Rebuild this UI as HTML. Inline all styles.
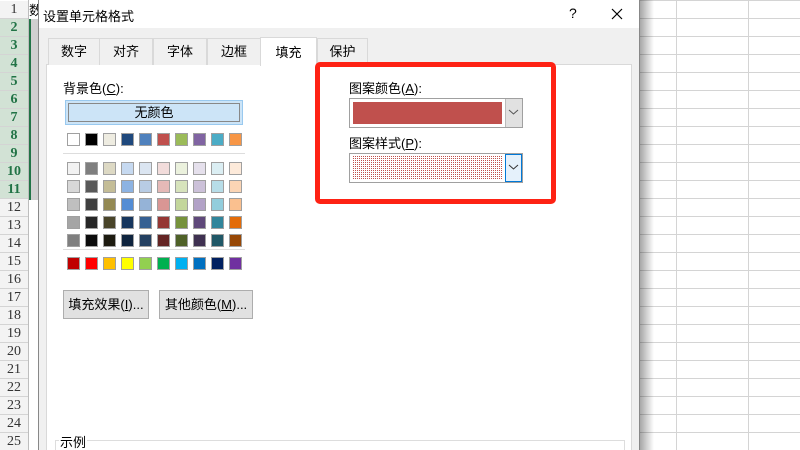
<!DOCTYPE html>
<html style="width:800px;height:450px;overflow:hidden"><head><meta charset="utf-8"><style>
*{margin:0;padding:0;box-sizing:border-box}
body{width:800px;height:450px;overflow:hidden;background:#fff;position:relative;font-family:"Liberation Sans","Noto Sans CJK SC",sans-serif;font-size:12px;color:#000}
.a{position:absolute}
.rh{position:absolute;left:0;width:28px;height:18px;text-align:center;font-size:14px;line-height:18px;font-family:"Liberation Serif","Noto Serif CJK SC",serif;border-bottom:1px solid #d4d4d4;background:#f3f3f3;color:#333}
.rh.s{background:#d2e2d5;color:#217346;font-weight:bold}
.sw{position:absolute;width:13px;height:13px;border:1px solid #a0a0a0}
.tab{position:absolute;top:38px;height:27px;border:1px solid #d9d9d9;border-bottom:none;background:#f0f0f0;text-align:center;line-height:26px;font-size:13px}
.btn{position:absolute;background:#e1e1e1;border:1px solid #adadad;text-align:center;font-size:13px}
</style></head><body>
<div class="a" style="left:640px;top:0;width:160px;height:450px;background:repeating-linear-gradient(to bottom,transparent 0,transparent 1px,#fff 1px,#fff 18px),#d4d4d4"></div>
<div class="a" style="left:676px;top:0;width:1px;height:450px;background:#d4d4d4"></div>
<div class="a" style="left:748px;top:0;width:1px;height:450px;background:#d4d4d4"></div>
<div class="a" style="left:640px;top:0;width:14px;height:450px;background:linear-gradient(to right,rgba(0,0,0,.35),rgba(0,0,0,0))"></div>
<div id="rows"></div>
<div class="a" style="left:28px;top:0;width:1px;height:450px;background:#bdbdbd"></div>
<div class="a" style="left:29px;top:19px;width:10px;height:181px;background:#d0d0d0;border-left:2px solid #217346"></div>
<div class="a" style="left:29px;top:0;width:10px;height:19px;background:#fff;font-size:13px;overflow:hidden">数</div>
<div class="a" style="left:38px;top:0;width:135px;height:2px;background:#217346"></div>
<div class="a" style="left:38px;top:0;width:602px;height:450px;background:#f0f0f0;border-left:1px solid #888;border-right:1px solid #888;overflow:hidden">
 <div class="a" style="left:0;top:0;width:600px;height:28px;background:#fff"></div>
 <div class="a" style="left:4px;top:6px;font-size:13px">设置单元格格式</div>
 <div class="a" style="left:530px;top:5px;font-size:14px">?</div>
 <svg class="a" style="left:572px;top:8px" width="12" height="12"><path d="M1 1L11 11M11 1L1 11" stroke="#000" stroke-width="1.2"/></svg>
 <div class="a" style="left:7px;top:64px;width:586px;height:390px;background:#fff;border:1px solid #d9d9d9"></div>
 <div class="tab" style="left:9px;width:52px">数字</div>
 <div class="tab" style="left:60px;width:54px">对齐</div>
 <div class="tab" style="left:114px;width:54px">字体</div>
 <div class="tab" style="left:168px;width:54px">边框</div>
 <div class="tab" style="left:221px;top:37px;width:57px;height:29px;background:#fff;line-height:29px">填充</div>
 <div class="tab" style="left:278px;width:51px">保护</div>
 <div class="a" style="left:24px;top:78px;font-size:13px">背景色(<u>C</u>):</div>
 <div class="a" style="left:26px;top:100px;width:178px;height:25px;background:#cce4f7;border:1px solid #99c9ef;padding:2px">
  <div style="width:100%;height:100%;border:1px solid #888;text-align:center;line-height:17px;font-size:13px">无颜色</div></div>
 <div class="a" style="left:24px;top:153px;width:182px;height:1px;background:#ddd"></div>
 <div class="a" style="left:24px;top:249px;width:182px;height:1px;background:#ddd"></div>
 <div id="sw"></div>
 <div class="btn" style="left:24px;top:290px;width:86px;height:29px;line-height:27px">填充效果(<u>I</u>)...</div>
 <div class="btn" style="left:120px;top:290px;width:94px;height:29px;line-height:27px">其他颜色(<u>M</u>)...</div>
 <div class="a" style="left:310px;top:78px;font-size:13px">图案颜色(<u>A</u>):</div>
 <div class="a" style="left:310px;top:98px;width:174px;height:30px;background:#fff;border:1px solid #a0a0a0"></div>
 <div class="a" style="left:314px;top:102px;width:149px;height:22px;background:#c0504d"></div>
 <div class="a" style="left:466px;top:99px;width:17px;height:28px;background:#e1e1e1;border-left:1px solid #bbb"></div>
 <svg class="a" style="left:469px;top:108px" width="11" height="8"><path d="M1 2L5.5 6L10 2" fill="none" stroke="#555" stroke-width="1"/></svg>
 <div class="a" style="left:310px;top:133px;font-size:13px">图案样式(<u>P</u>):</div>
 <div class="a" style="left:310px;top:153px;width:174px;height:30px;background:#fff;border:1px solid #a0a0a0"></div>
 <svg class="a" style="left:314px;top:156px" width="150" height="23"><defs><pattern id="p" width="2" height="2" patternUnits="userSpaceOnUse"><rect width="1" height="1" fill="#c0504d"/></pattern></defs><rect width="150" height="23" fill="url(#p)"/></svg>
 <div class="a" style="left:466px;top:154px;width:17px;height:28px;background:#e5f1fb;border:1px solid #0078d7"></div>
 <svg class="a" style="left:469px;top:163px" width="11" height="8"><path d="M1 2L5.5 6L10 2" fill="none" stroke="#333" stroke-width="1"/></svg>
 <div class="a" style="left:16px;top:440px;width:570px;height:20px;border:1px solid #ddd"></div>
 <div class="a" style="left:20px;top:432px;background:#fff;font-size:13px;padding:0 1px">示例</div>
</div>
<div class="a" style="left:315px;top:62px;width:241px;height:142px;border:5px solid #fe2214;border-radius:5px"></div>
<script>
var r='';for(var i=1;i<=25;i++){r+='<div class="rh'+(i>=2&&i<=11?' s':'')+'" style="top:'+(1+18*(i-1))+'px">'+i+'</div>';}
document.getElementById('rows').innerHTML=r;
var th=['#fff','#000','#eeece1','#1f497d','#4f81bd','#c0504d','#9bbb59','#8064a2','#4bacc6','#f79646'];
var g=[['#f2f2f2','#7f7f7f','#ddd9c4','#c6d9f0','#dbe5f1','#f2dcdb','#ebf1dd','#e5e0ec','#dbeef3','#fdeada'],
['#d8d8d8','#595959','#c4bd97','#8db3e2','#b8cce4','#e5b9b7','#d7e3bc','#ccc1d9','#b7dde8','#fbd5b5'],
['#bfbfbf','#3f3f3f','#938953','#548dd4','#95b3d7','#d99694','#c3d69b','#b2a2c7','#92cddc','#fac08f'],
['#a5a5a5','#262626','#494429','#17365d','#366092','#953734','#76923c','#5f497a','#31859b','#e36c09'],
['#7f7f7f','#0c0c0c','#1d1b10','#0f243e','#244061','#632423','#4f6128','#3f3151','#205867','#974806']];
var st=['#c00000','#f00','#ffc000','#ff0','#92d050','#00b050','#00b0f0','#0070c0','#002060','#7030a0'];
var s='';function row(c,y){for(var j=0;j<10;j++)s+='<div class="sw" style="left:'+(28+18*j)+'px;top:'+y+'px;background:'+c[j]+'"></div>';}
row(th,133);for(var k=0;k<5;k++)row(g[k],162+18*k);row(st,257);
document.getElementById('sw').innerHTML=s;
</script>
</body></html>
